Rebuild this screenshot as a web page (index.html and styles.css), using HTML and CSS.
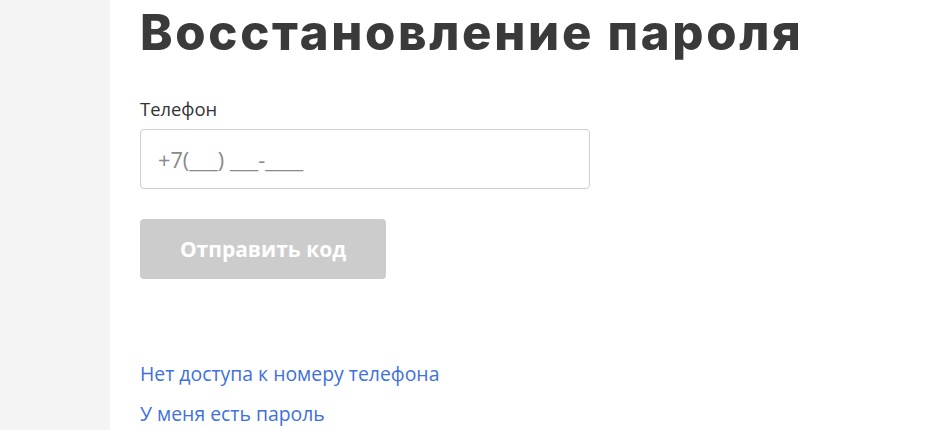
FILE: index.html
```html
<!DOCTYPE html>
<html lang="ru">
<head>
<meta charset="utf-8">
<title>Восстановление пароля</title>
<link rel="stylesheet" href="styles.css">
</head>
<body>
<div class="page">
  <aside class="sidebar"></aside>
  <main class="main">
    <h1 class="title">Восстановление пароля</h1>
    <form class="form">
      <label class="label" for="phone">Телефон</label>
      <input class="input" id="phone" type="text" placeholder="+7(___) ___-____">
      <button class="btn" type="button" disabled>Отправить код</button>
    </form>
    <nav class="links">
      <a class="link" href="#">Нет доступа к номеру телефона</a>
      <a class="link" href="#">У меня есть пароль</a>
    </nav>
  </main>
</div>
</body>
</html>
```

FILE: styles.css
```css
html, body {
  margin: 0;
  padding: 0;
  background: #fff;
  height: 100%;
  overflow: hidden;
}
.page {
  display: flex;
  min-height: 430px;
  font-family: "Open Sans", "Noto Sans", sans-serif;
}
.sidebar {
  width: 110px;
  flex: none;
  background: #f4f4f4;
}
.main {
  padding-left: 30px;
  display: flex;
  flex-direction: column;
}
.title {
  margin: 0;
  padding-top: 3px;
  font-family: Inter, "Open Sans", sans-serif;
  font-weight: 800;
  font-size: 49px;
  line-height: 60px;
  color: #3a3a3a;
  letter-spacing: 2.7px;
}
.form {
  display: flex;
  flex-direction: column;
  align-items: flex-start;
  margin-top: 34px;
}
.label {
  font-size: 18.4px;
  line-height: 24px;
  color: #333;
}
.input {
  margin-top: 8px;
  box-sizing: border-box;
  width: 450px;
  height: 60px;
  border: 1px solid #cfcfcf;
  border-radius: 4px;
  padding: 0 17px;
  font-family: "Open Sans", sans-serif;
  font-size: 21.7px;
  color: #333;
  outline: none;
}
.input::placeholder {
  color: #8a8a8a;
}
.btn {
  margin-top: 30px;
  width: 246px;
  height: 60px;
  border: none;
  border-radius: 4px;
  background: #cccccc;
  color: #fff;
  font-family: "Open Sans", sans-serif;
  font-weight: 700;
  font-size: 21px;
}
.links {
  display: flex;
  flex-direction: column;
  align-items: flex-start;
  gap: 13px;
  margin-top: 81px;
}
.link {
  font-size: 19.4px;
  line-height: 27px;
  color: #3f70dc;
  text-decoration: none;
}
```
